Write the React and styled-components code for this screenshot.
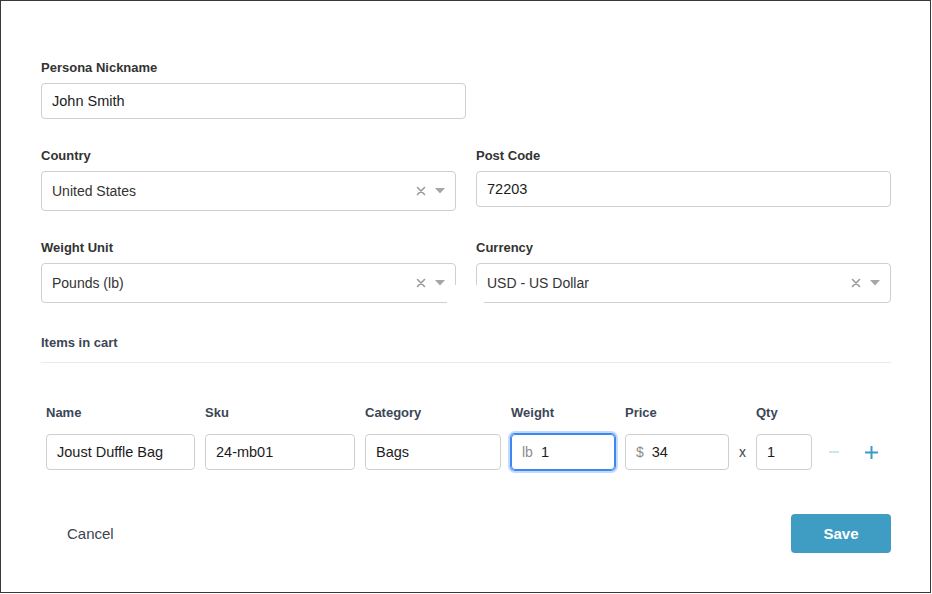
import React from "react";
import styled, { createGlobalStyle } from "styled-components";

const Global = createGlobalStyle`
  html, body { margin: 0; padding: 0; background: #fff; }
  body { font-family: "Liberation Sans", Arial, sans-serif; }
  * { box-sizing: border-box; }
`;

const Modal = styled.div`
  width: 931px;
  height: 593px;
  border: 1px solid #3a3a3a;
  background: #fff;
  padding: 59px 40px 0 40px;
  display: flex;
  flex-direction: column;
`;

const Field = styled.div`
  display: flex;
  flex-direction: column;
  width: ${(p) => p.$width || "auto"};
  margin-top: ${(p) => p.$top || 0}px;
`;

const Label = styled.label`
  font-size: 13px;
  font-weight: 700;
  line-height: 16px;
  color: #333;
  margin-bottom: 7px;
`;

const TextInput = styled.div`
  height: 36px;
  border: 1px solid #cfcfcf;
  border-radius: 4px;
  padding: 0 10px;
  display: flex;
  align-items: center;
  font-size: 14.5px;
  color: #1c1c1c;
`;

const SelectBox = styled.div`
  height: 40px;
  border: 1px solid #cfcfcf;
  border-radius: 4px;
  padding: 0 10px 0 10px;
  display: flex;
  align-items: center;
  font-size: 14px;
  color: #333;
`;

const SelectValue = styled.span`
  flex: 1;
`;

const Indicators = styled.span`
  display: flex;
  align-items: center;
  gap: 9px;
`;

const Row = styled.div`
  display: grid;
  grid-template-columns: 415px 415px;
  column-gap: 20px;
  margin-top: 29px;
  position: relative;
`;

const Mask = styled.div`
  position: absolute;
  left: 406px;
  top: 137px;
  width: 37px;
  height: 22px;
  background: #fff;
`;

const SectionTitle = styled.div`
  margin-top: 31px;
  font-size: 13px;
  font-weight: 700;
  line-height: 17px;
  color: #3b4656;
  padding-bottom: 11px;
  border-bottom: 1px solid #e9ecef;
  width: 850px;
`;

const CartGrid = styled.div`
  margin-top: 42px;
  margin-left: 5px;
  display: grid;
  grid-template-columns: 149px 150px 136px 104px 104px 7px 56px 1fr;
  column-gap: 10px;
  row-gap: 13px;
  align-items: center;
  width: 845px;
`;

const ColHead = styled.div`
  font-size: 13px;
  font-weight: 700;
  line-height: 16px;
  color: #3b4656;
`;

const CellInput = styled.div`
  height: 36px;
  border: 1px solid ${(p) => (p.$focus ? "#3d87f5" : "#cfcfcf")};
  border-radius: 4px;
  padding: 0 10px;
  display: flex;
  align-items: center;
  font-size: 14.5px;
  color: #1c1c1c;
  box-shadow: ${(p) =>
    p.$focus ? "0 0 0 1px #3d87f5, 0 0 0 3px rgba(61,135,245,0.3)" : "none"};
`;

const Prefix = styled.span`
  color: #8c8c8c;
  font-size: 14px;
  margin-right: 8px;
`;

const Times = styled.div`
  font-size: 14px;
  color: #444;
`;

const Controls = styled.div`
  display: flex;
  align-items: center;
  gap: 26px;
  padding-left: 7px;
`;

const IconBtn = styled.span`
  display: inline-flex;
  align-items: center;
  justify-content: center;
`;

const Footer = styled.div`
  margin-top: 44px;
  display: flex;
  justify-content: space-between;
  align-items: center;
  width: 850px;
`;

const CancelBtn = styled.span`
  font-size: 15px;
  color: #3d4450;
  padding-left: 26px;
`;

const SaveBtn = styled.div`
  width: 100px;
  height: 39px;
  border-radius: 4px;
  background: #3f9dc4;
  color: #fff;
  font-size: 15px;
  font-weight: 700;
  display: flex;
  align-items: center;
  justify-content: center;
`;

const ClearIcon = () => (
  <svg width="10" height="10" viewBox="0 0 10 10">
    <path d="M1.5 1.5 L8.5 8.5 M8.5 1.5 L1.5 8.5" stroke="#9a9a9a" strokeWidth="1.6" strokeLinecap="round" />
  </svg>
);

const Caret = () => (
  <svg width="10" height="6" viewBox="0 0 10 6">
    <path d="M0 0 L10 0 L5 5.5 Z" fill="#a6a6a6" />
  </svg>
);

const Select = ({ value }) => (
  <SelectBox>
    <SelectValue>{value}</SelectValue>
    <Indicators>
      <ClearIcon />
      <Caret />
    </Indicators>
  </SelectBox>
);

export default function App() {
  return (
    <>
      <Global />
      <Modal>
        <Field $width="425px">
          <Label>Persona Nickname</Label>
          <TextInput>John Smith</TextInput>
        </Field>
        <Row>
          <Field>
            <Label>Country</Label>
            <Select value="United States" />
          </Field>
          <Field>
            <Label>Post Code</Label>
            <TextInput>72203</TextInput>
          </Field>
          <Field $top={29}>
            <Label>Weight Unit</Label>
            <Select value="Pounds (lb)" />
          </Field>
          <Field $top={29}>
            <Label>Currency</Label>
            <Select value="USD - US Dollar" />
          </Field>
          <Mask />
        </Row>
        <SectionTitle>Items in cart</SectionTitle>
        <CartGrid>
          <ColHead>Name</ColHead>
          <ColHead>Sku</ColHead>
          <ColHead>Category</ColHead>
          <ColHead>Weight</ColHead>
          <ColHead>Price</ColHead>
          <span />
          <ColHead>Qty</ColHead>
          <span />
          <CellInput>Joust Duffle Bag</CellInput>
          <CellInput>24-mb01</CellInput>
          <CellInput>Bags</CellInput>
          <CellInput $focus>
            <Prefix>lb</Prefix>1
          </CellInput>
          <CellInput>
            <Prefix>$</Prefix>34
          </CellInput>
          <Times>x</Times>
          <CellInput>1</CellInput>
          <Controls>
            <IconBtn>
              <svg width="10" height="10" viewBox="0 0 10 10">
                <path d="M0 5 H10" stroke="#cfe6f1" strokeWidth="2" />
              </svg>
            </IconBtn>
            <IconBtn>
              <svg width="13" height="13" viewBox="0 0 13 13">
                <path d="M0 6.5 H13 M6.5 0 V13" stroke="#3a9cc8" strokeWidth="2" />
              </svg>
            </IconBtn>
          </Controls>
        </CartGrid>
        <Footer>
          <CancelBtn>Cancel</CancelBtn>
          <SaveBtn>Save</SaveBtn>
        </Footer>
      </Modal>
    </>
  );
}
